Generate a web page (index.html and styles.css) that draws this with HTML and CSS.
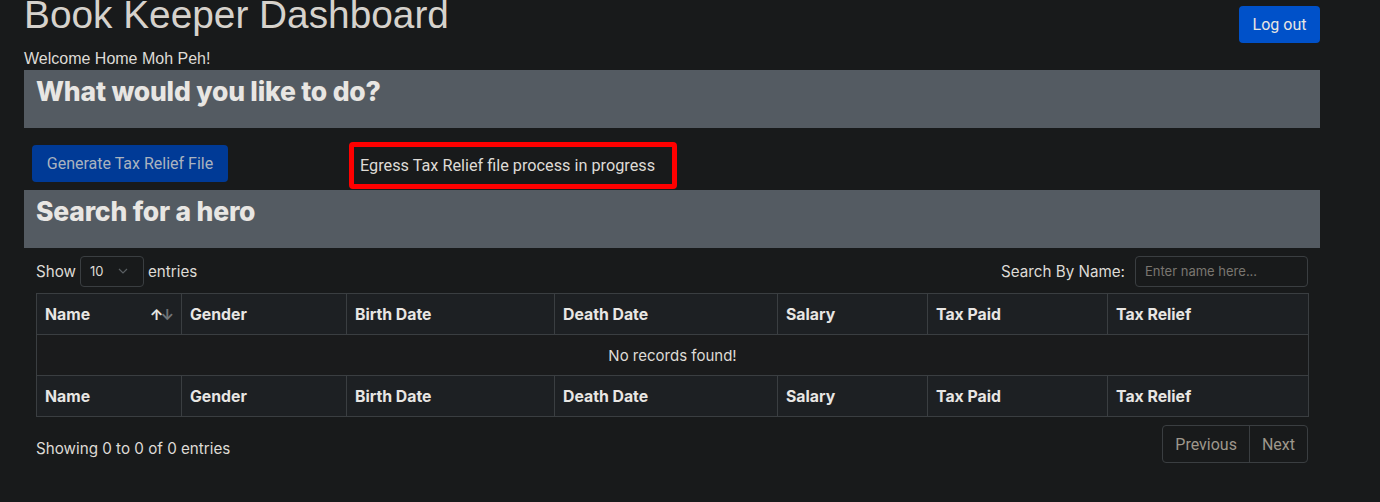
FILE: index.html
```html
<!DOCTYPE html>
<html>
<head>
<meta charset="utf-8">
<link rel="stylesheet" href="styles.css">
</head>
<body>
<div class="page">
  <header class="top">
    <div class="title-block">
      <h1 class="title">Book Keeper Dashboard</h1>
      <div class="welcome">Welcome Home Moh Peh!</div>
    </div>
    <button class="btn btn-logout">Log out</button>
  </header>

  <section class="bar"><h2>What would you like to do?</h2></section>

  <div class="actions">
    <button class="btn btn-generate">Generate Tax Relief File</button>
    <div class="status">Egress Tax Relief file process in progress</div>
  </div>

  <section class="bar"><h2>Search for a hero</h2></section>

  <div class="dt">
    <div class="dt-top">
      <div class="len">Show <span class="select">10 <svg width="10" height="6" viewBox="0 0 10 6"><path d="M1 1l4 4 4-4" fill="none" stroke="#5a5f63" stroke-width="1.2"/></svg></span> entries</div>
      <div class="search">Search By Name: <span class="input">Enter name here...</span></div>
    </div>
    <table class="grid">
      <colgroup>
        <col class="c1"><col class="c2"><col class="c3"><col class="c4"><col class="c5"><col class="c6"><col class="c7">
      </colgroup>
      <thead>
        <tr><th><span class="sort-th">Name <span class="sort"><span class="up">↑</span><span class="dn">↓</span></span></span></th><th>Gender</th><th>Birth Date</th><th>Death Date</th><th>Salary</th><th>Tax Paid</th><th>Tax Relief</th></tr>
      </thead>
      <tbody>
        <tr><td colspan="7" class="empty">No records found!</td></tr>
      </tbody>
      <tfoot>
        <tr><th>Name</th><th>Gender</th><th>Birth Date</th><th>Death Date</th><th>Salary</th><th>Tax Paid</th><th>Tax Relief</th></tr>
      </tfoot>
    </table>
    <div class="dt-bottom">
      <div class="info">Showing 0 to 0 of 0 entries</div>
      <div class="pager"><span class="pg">Previous</span><span class="pg">Next</span></div>
    </div>
  </div>
</div>
</body>
</html>
```

FILE: styles.css
```css
* { box-sizing: border-box; }
html, body { margin: 0; padding: 0; background: #181a1b; }
body { font-family: Inter, "Liberation Sans", sans-serif; color: #dedbd6; overflow: hidden; }
.page { width: 1296px; margin-left: 24px; }

.top { display: flex; justify-content: space-between; align-items: flex-start; height: 70px; }
.title { font-family: "Liberation Sans", Arial, sans-serif; font-weight: 400; font-size: 38.8px; line-height: 34px; margin: -2px 0 0 0; color: #d6d2cc; letter-spacing: 0; }
.welcome { font-family: "Liberation Sans", Arial, sans-serif; font-size: 16px; margin-top: 18px; line-height: 18px; color: #dedbd6; }

.btn { border: 0; border-radius: 4px; font-family: Roboto, Inter, sans-serif; font-size: 16px; cursor: pointer; }
.btn-logout { background: #0051c9; color: #e8e6e3; width: 81px; height: 37px; margin-top: 6px; padding: 0; }

.bar { background: #545b62; height: 58px; padding: 6px 12px; }
.bar h2 { margin: 0; font-family: Inter, sans-serif; font-weight: 800; font-size: 26.5px; line-height: 30px; color: #e8e6e3; letter-spacing: -0.2px; }

.actions { display: flex; align-items: flex-start; height: 62px; padding-left: 8px; }
.btn-generate { background: #003a96; color: #aab3bf; width: 196px; height: 37px; padding: 0; margin-top: 17px; }
.status { margin-left: 121px; margin-top: 14px; border: 5px solid #ff0000; border-radius: 4px; width: 328px; height: 47px; padding: 0 0 0 6px; display: flex; align-items: center; font-family: Roboto, sans-serif; font-size: 16.25px; color: #dedbd6; }

.dt { padding: 0 12px; }
.dt-top { display: flex; justify-content: space-between; align-items: center; height: 45px; padding-top: 1px; font-family: Inter, sans-serif; font-size: 15.2px; color: #dedbd6; }
.len { display: flex; align-items: center; }
.select { display: inline-flex; align-items: center; justify-content: space-between; width: 64px; height: 31px; border: 1px solid #3a3e41; border-radius: 4px; margin: 0 4px; padding: 0 15px 0 9px; font-size: 13px; }
.search { display: flex; align-items: center; }
.input { display: inline-flex; align-items: center; width: 173px; height: 31px; border: 1px solid #3a3e41; border-radius: 4px; margin-left: 10px; padding: 0 9px; font-size: 13px; color: #7a7670; }

.grid { width: 1272px; border-collapse: collapse; table-layout: fixed; font-family: Inter, sans-serif; font-size: 15.8px; }
.c1 { width: 145px; } .c2 { width: 165px; } .c3 { width: 208px; } .c4 { width: 223px; } .c5 { width: 150px; } .c6 { width: 180px; } .c7 { width: 201px; }
.grid th, .grid td { border: 1px solid #3a3e41; height: 41px; padding: 0 8px; text-align: left; }
.grid thead th, .grid tfoot th { background: #1d2023; font-weight: 700; color: #e8e6e3; }
.grid td.empty { background: #1a1b1c; text-align: center; height: 41px; font-weight: 400; font-size: 15px; color: #dedbd6; }
.sort-th { display: flex; justify-content: space-between; align-items: center; }
.sort { font-size: 15px; font-weight: 700; letter-spacing: -3px; margin-right: 2px; }
.sort .up { color: #e8e6e3; }
.sort .dn { color: #6e7377; }

.dt-bottom { display: flex; justify-content: space-between; align-items: center; margin-top: 10px; }
.info { font-family: Inter, sans-serif; font-size: 15.2px; color: #dedbd6; margin-top: 7px; }
.pager { display: flex; border: 1px solid #3a3e41; border-radius: 4px; height: 38px; margin-top: -2px; }
.pg { display: flex; align-items: center; padding: 0 12px; font-family: Roboto, sans-serif; font-size: 16px; color: #9e978c; }
.pg + .pg { border-left: 1px solid #3a3e41; }
```
